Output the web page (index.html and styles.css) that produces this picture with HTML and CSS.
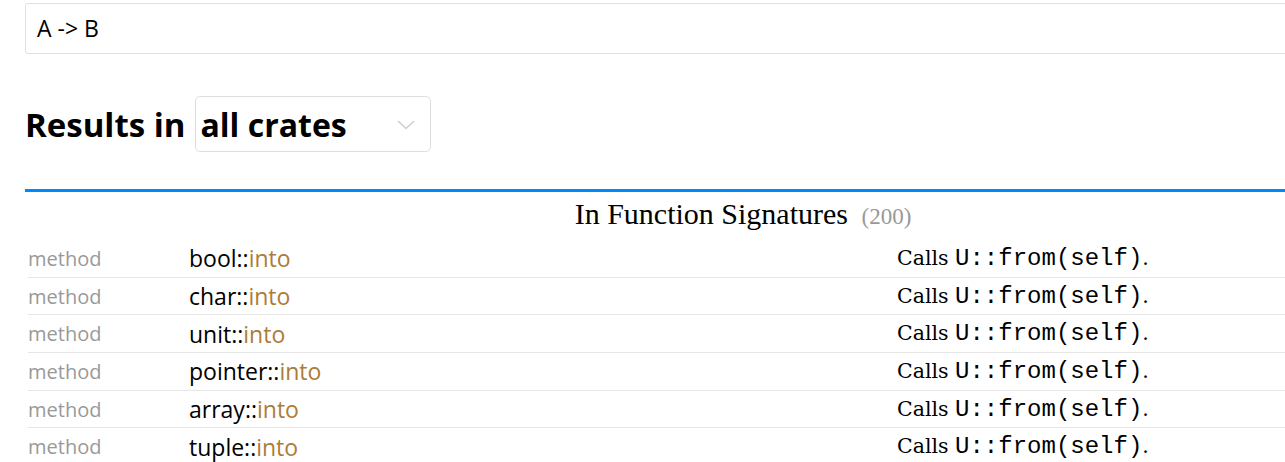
FILE: index.html
```html
<!DOCTYPE html>
<html>
<head>
<meta charset="utf-8">
<link rel="stylesheet" href="styles.css">
</head>
<body>
<div class="page">
  <div class="search-box">A -&gt; B</div>
  <h1 class="results-title">Results in
    <span class="crate-select">all crates
      <svg class="chevron" width="18" height="10" viewBox="0 0 18 10"><path d="M1 1 L9 8.5 L17 1" fill="none" stroke="#cfcfcf" stroke-width="1.6"/></svg>
    </span>
  </h1>
  <div class="tab-header">In Function Signatures <span class="count">(200)</span></div>
  <div class="results">
    <div class="row"><span class="kind">method</span><span class="name">bool::<span class="fn">into</span></span><span class="desc">Calls <code>U::from(self)</code>.</span></div>
    <div class="row"><span class="kind">method</span><span class="name">char::<span class="fn">into</span></span><span class="desc">Calls <code>U::from(self)</code>.</span></div>
    <div class="row"><span class="kind">method</span><span class="name">unit::<span class="fn">into</span></span><span class="desc">Calls <code>U::from(self)</code>.</span></div>
    <div class="row"><span class="kind">method</span><span class="name">pointer::<span class="fn">into</span></span><span class="desc">Calls <code>U::from(self)</code>.</span></div>
    <div class="row"><span class="kind">method</span><span class="name">array::<span class="fn">into</span></span><span class="desc">Calls <code>U::from(self)</code>.</span></div>
    <div class="row"><span class="kind">method</span><span class="name">tuple::<span class="fn">into</span></span><span class="desc">Calls <code>U::from(self)</code>.</span></div>
  </div>
</div>
</body>
</html>
```
FILE: styles.css
```css
html, body {
  margin: 0;
  padding: 0;
  background: #fff;
  overflow: hidden;
}
body {
  font-family: "Open Sans", "Noto Sans", sans-serif;
  color: #000;
}
.page {
  width: 1436px;
  padding: 3px 0 0 25px;
}
.search-box {
  box-sizing: border-box;
  height: 51px;
  border: 1px solid #e0e0e0;
  border-radius: 3px;
  padding: 0 11px;
  font-size: 23px;
  line-height: 49px;
  font-family: "Open Sans", sans-serif;
}
.results-title {
  margin: 42px 0 0 0;
  display: flex;
  align-items: center;
  font-size: 33px;
  font-weight: 700;
  height: 56px;
}
.crate-select {
  box-sizing: border-box;
  margin-left: 9px;
  width: 236px;
  height: 56px;
  border: 1px solid #dedede;
  border-radius: 5px;
  padding: 0 5px;
  display: flex;
  align-items: center;
  justify-content: space-between;
  font-size: 32px;
}
.chevron {
  margin-right: 10px;
  margin-top: 2px;
}
.tab-header {
  margin-top: 37px;
  border-top: 3px solid #0089ff;
  height: 51px;
  box-sizing: border-box;
  text-align: center;
  font-family: "Liberation Serif", "DejaVu Serif", serif;
  font-size: 30px;
  line-height: 44px;
}
.tab-header .count {
  color: #999;
  font-size: 23px;
  margin-left: 6px;
}
.results {
  margin-left: 3px;
}
.row {
  box-sizing: border-box;
  height: 37.7px;
  display: grid;
  grid-template-columns: 161px 708px 1fr;
  align-items: center;
  border-bottom: 1px solid #e6e6e6;
}
.kind {
  color: #999;
  font-size: 20px;
}
.name {
  font-size: 23px;
}
.fn {
  color: #ad7c37;
}
.desc {
  font-family: "DejaVu Serif", "Liberation Serif", serif;
  font-size: 20.5px;
}
.desc code {
  font-family: "Liberation Mono", monospace;
  font-size: 24px;
}
```
